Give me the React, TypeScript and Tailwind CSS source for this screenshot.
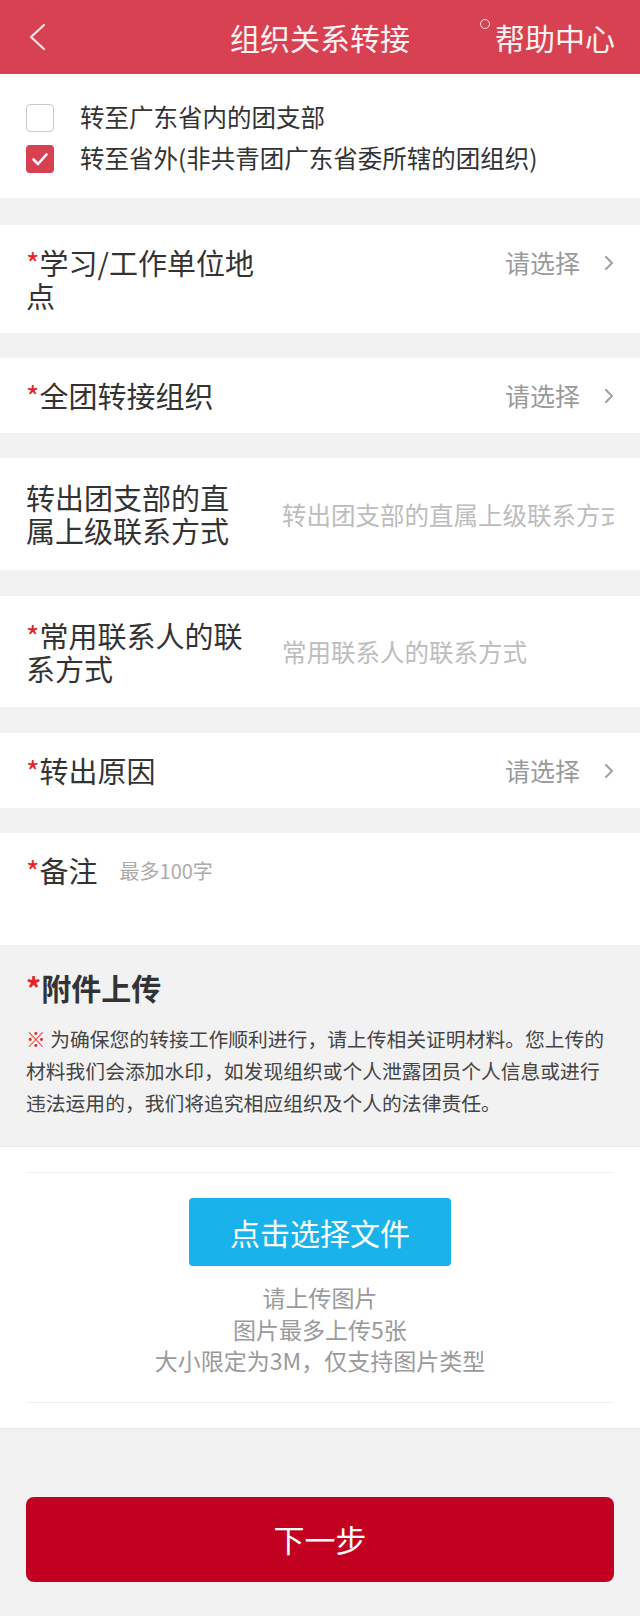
import React from "react";

function Chevron() {
  return (
    <svg width="10" height="16" viewBox="0 0 10 16" className="ml-[24px]">
      <path d="M2 2 L8 8 L2 14" stroke="#a3a3a3" strokeWidth="2.2" fill="none" strokeLinecap="round" strokeLinejoin="round" />
    </svg>
  );
}

function Star() {
  return <span className="text-[#e0262c]">*</span>;
}

function SelectRow({ label, h }: { label: React.ReactNode; h: string }) {
  return (
    <div className={`flex items-start bg-white pl-[26px] pr-[26px] pt-[21px] ${h}`}>
      <div className="w-[230px] text-[29px] leading-[33px] text-[#333]">{label}</div>
      <div className="ml-auto flex h-[33px] items-center">
        <span className="text-[25px] text-[#9a9a9a]">请选择</span>
        <Chevron />
      </div>
    </div>
  );
}

function InputRow({ label, placeholder, h }: { label: React.ReactNode; placeholder: string; h: string }) {
  return (
    <div className={`flex items-center bg-white pl-[26px] pr-[26px] ${h}`}>
      <div className="w-[230px] shrink-0 text-[29px] leading-[33px] text-[#333]">{label}</div>
      <input
        readOnly
        placeholder={placeholder}
        className="ml-[26px] min-w-0 flex-1 bg-transparent text-[24.5px] leading-[33px] text-[#333] outline-none placeholder:text-[#bdbdbd]"
      />
    </div>
  );
}

export default function App() {
  return (
    <div className="min-h-[1616px] w-[640px] bg-[#f2f2f2] font-['Noto_Sans_CJK_SC','Noto_Sans',sans-serif]">
      {/* Header */}
      <div className="grid h-[74px] grid-cols-[1fr_auto_1fr] items-center bg-[#d84152] text-[#fdf3f4]">
        <div className="flex items-center pl-[28px]">
          <svg width="18" height="28" viewBox="0 0 18 28">
            <path d="M16 2 L3 14 L16 26" stroke="#fbe9eb" strokeWidth="2.2" fill="none" strokeLinecap="round" strokeLinejoin="round" />
          </svg>
        </div>
        <div className="text-[30px] leading-[40px]">组织关系转接</div>
        <div className="flex items-center justify-end pr-[25px]">
          <span className="mr-[5px] h-[10px] w-[10px] -translate-y-[13px] rounded-full border-[1.5px] border-[#fbe9eb]" />
          <span className="text-[30px] leading-[40px]">帮助中心</span>
        </div>
      </div>

      {/* Checkboxes */}
      <div className="flex flex-col bg-white pb-[19px] pt-[23px]">
        <div className="flex h-[41px] items-center pl-[26px]">
          <span className="h-[28px] w-[28px] rounded-[4px] border border-[#c8c8c8] bg-white" />
          <span className="ml-[26px] text-[24.5px] text-[#333]">转至广东省内的团支部</span>
        </div>
        <div className="flex h-[41px] items-center pl-[26px]">
          <span className="flex h-[28px] w-[28px] items-center justify-center rounded-[4px] bg-[#d83f51]">
            <svg width="28" height="28" viewBox="0 0 28 28">
              <path d="M7.5 14.5 L12 19 L20.5 9.5" stroke="#fff" strokeWidth="2.6" fill="none" strokeLinecap="round" strokeLinejoin="round" />
            </svg>
          </span>
          <span className="ml-[26px] text-[24.5px] text-[#333]">转至省外(非共青团广东省委所辖的团组织)</span>
        </div>
      </div>

      <div className="mt-[27px]">
        <SelectRow h="h-[108px]" label={<><Star />学习/工作单位地点</>} />
      </div>
      <div className="mt-[25px]">
        <SelectRow h="h-[75px]" label={<><Star />全团转接组织</>} />
      </div>
      <div className="mt-[25px]">
        <InputRow h="h-[112px]" label="转出团支部的直属上级联系方式" placeholder="转出团支部的直属上级联系方式" />
      </div>
      <div className="mt-[26px]">
        <InputRow h="h-[111px]" label={<><Star />常用联系人的联系方式</>} placeholder="常用联系人的联系方式" />
      </div>
      <div className="mt-[26px]">
        <SelectRow h="h-[75px]" label={<><Star />转出原因</>} />
      </div>
      <div className="mt-[25px] flex h-[112px] items-start bg-white pl-[26px] pr-[26px] pt-[21px]">
        <div className="shrink-0 text-[29px] leading-[33px] text-[#333]">
          <Star />备注
        </div>
        <textarea
          readOnly
          placeholder="最多100字"
          className="ml-[22px] h-[68px] min-w-0 flex-1 resize-none bg-transparent text-[20px] leading-[33px] text-[#333] outline-none placeholder:text-[#ababab]"
        />
      </div>

      {/* Attachment */}
      <div className="px-[26px] pb-[27px] pt-[22px]">
        <div className="text-[30px] font-bold leading-[40px] text-[#333]">
          <Star />附件上传
        </div>
        <p className="mt-[16px] text-[19.8px] leading-[32px] text-[#444]">
          <span className="text-[#e0262c]">※</span> 为确保您的转接工作顺利进行，请上传相关证明材料。您上传的材料我们会添加水印，如发现组织或个人泄露团员个人信息或进行违法运用的，我们将追究相应组织及个人的法律责任。
        </p>
      </div>

      <div className="border-y border-[#e8e8e8] bg-white py-[25px]">
        <div className="mx-[26px] flex flex-col items-center border-y border-[#f1f1f1] pb-[25px] pt-[25px]">
          <button className="flex h-[68px] w-[262px] items-center justify-center rounded-[4px] bg-[#19b2ea] text-[30px] text-white">
            点击选择文件
          </button>
          <div className="mt-[16px] flex flex-col items-center text-[23px] leading-[31.5px] text-[#9a9a9a]">
            <span>请上传图片</span>
            <span>图片最多上传5张</span>
            <span>大小限定为3M，仅支持图片类型</span>
          </div>
        </div>
      </div>

      <div className="px-[26px] pb-[34px] pt-[68px]">
        <button className="flex h-[85px] w-full items-center justify-center rounded-[8px] bg-[#c2001f] text-[31px] text-white">
          下一步
        </button>
      </div>
    </div>
  );
}
